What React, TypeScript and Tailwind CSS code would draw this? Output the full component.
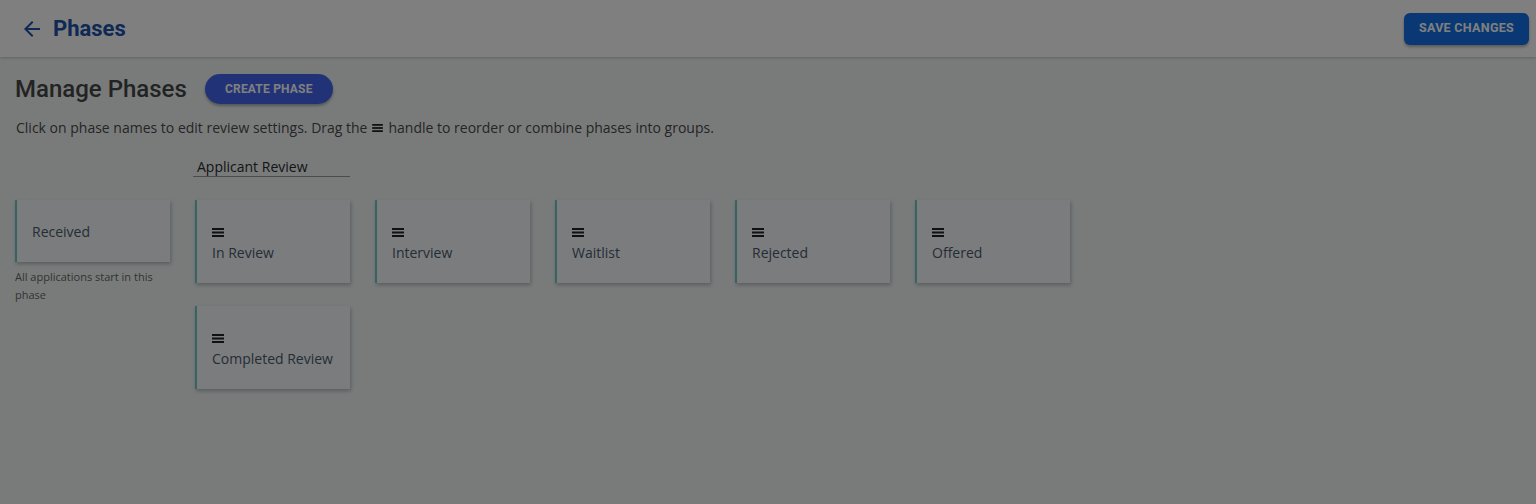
import React from "react"

const groupPhases = ["In Review", "Interview", "Waitlist", "Rejected", "Offered", "Completed Review"]

function BackArrow() {
  return (
    <svg width="24" height="24" viewBox="0 0 24 24" fill="currentColor">
      <path d="M20 11H7.83l5.59-5.59L12 4l-8 8 8 8 1.41-1.41L7.83 13H20v-2z" />
    </svg>
  )
}

function Handle({ className = "" }: { className?: string }) {
  return (
    <svg width="12" height="9" viewBox="0 0 12 9" fill="currentColor" className={className}>
      <rect x="0" y="0" width="12" height="2" />
      <rect x="0" y="3.5" width="12" height="2" />
      <rect x="0" y="7" width="12" height="2" />
    </svg>
  )
}

function PhaseCard({ name }: { name: string }) {
  return (
    <div className="h-[83px] w-[155px] bg-[#f6f9fb] border-l-2 border-[#6cc9c2] shadow-[1px_2px_4px_rgba(0,0,0,0.25)] pl-[15px] pt-[28px]">
      <Handle className="text-[#222]" />
      <div className="mt-[6px] text-[14px] leading-[20px] text-[#4a5a6e]">{name}</div>
    </div>
  )
}

export default function App() {
  return (
    <div className="relative min-h-[504px] bg-[#f2f7f7] font-['Open_Sans',sans-serif]">
      <header className="h-[57px] bg-white flex items-center justify-between pl-[20px] pr-[7px] shadow-[0_1px_3px_rgba(0,0,0,0.2)]">
        <div className="flex items-center gap-[9px] text-[#1d52aa]">
          <BackArrow />
          <span className="font-['Roboto',sans-serif] font-bold text-[22px] leading-none">Phases</span>
        </div>
        <button className="h-[32px] w-[125px] rounded-[6px] bg-[#1270e8] text-white font-['Roboto',sans-serif] font-bold text-[12.5px] tracking-[0.3px] shadow-[0_2px_3px_rgba(0,0,0,0.3)]">
          SAVE CHANGES
        </button>
      </header>

      <main className="pl-[15px] pt-[17px]">
        <div className="flex items-center gap-[18px] h-[30px]">
          <h1 className="font-['Roboto',sans-serif] font-medium text-[24px] leading-none text-[#464646]">Manage Phases</h1>
          <button className="h-[30px] w-[128px] rounded-full bg-[#4464ee] text-white font-['Roboto',sans-serif] font-bold text-[12px] tracking-[0.2px] shadow-[0_2px_3px_rgba(0,0,0,0.3)]">
            CREATE PHASE
          </button>
        </div>

        <p className="mt-[14px] pl-[1px] text-[14px] leading-[20px] text-[#4a4a4a] flex items-center">
          Click on phase names to edit review settings. Drag the
          <Handle className="mx-[5px] w-[11px] h-[8px] text-[#222]" />
          handle to reorder or combine phases into groups.
        </p>

        <div className="mt-[19px] flex items-start gap-[25px]">
          <div className="pt-[43px] w-[155px]">
            <div className="h-[62px] bg-[#f6f9fb] border-l-2 border-[#6cc9c2] shadow-[1px_2px_4px_rgba(0,0,0,0.25)] pl-[15px] flex items-center text-[14px] text-[#4a5a6e]">
              Received
            </div>
            <p className="mt-[6px] text-[11px] leading-[18px] text-[#666]">All applications start in this phase</p>
          </div>

          <div>
            <div className="-ml-[2px] w-[157px] h-[20px] border-b border-[#999] pl-[4px] text-[14px] leading-[19px] text-[#2a2a2a]">
              Applicant Review
            </div>
            <div className="mt-[23px] grid grid-cols-[repeat(5,155px)] gap-x-[25px] gap-y-[23px]">
              {groupPhases.map((p) => (
                <PhaseCard key={p} name={p} />
              ))}
            </div>
          </div>
        </div>
      </main>

      <div className="fixed inset-0 bg-black/50" />
    </div>
  )
}
